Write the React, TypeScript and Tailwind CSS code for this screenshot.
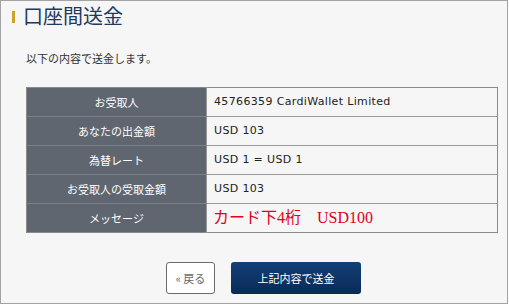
const rows: { label: string; value: string }[] = [
  { label: 'お受取人', value: '45766359 CardiWallet Limited' },
  { label: 'あなたの出金額', value: 'USD 103' },
  { label: '為替レート', value: 'USD 1 = USD 1' },
  { label: 'お受取人の受取金額', value: 'USD 103' },
];

const jp = "font-['Noto_Sans_CJK_JP',sans-serif]";

export default function App() {
  return (
    <div className="w-[509px] h-[306px] bg-white">
      <div className={`w-[508px] h-[304px] border border-[#a3a3a3] bg-[#f6f6f6] ${jp}`}>
        {/* 見出し */}
        <div className="flex items-center h-[29px] pl-[11px]">
          <span className="w-[3px] h-[12px] bg-[#c9a227] mt-[2px]" />
          <h1 className="ml-[8px] text-[20px] leading-none text-[#1f3a5f]">口座間送金</h1>
        </div>

        <p className="mt-[20px] ml-[25px] text-[11px] leading-[16px] text-[#333]">以下の内容で送金します。</p>

        {/* 確認テーブル */}
        <table className="mt-[21px] ml-[25px] w-[472px] border-collapse border border-[#8a8a8a]">
          <tbody>
            {rows.map((row) => (
              <tr key={row.label} className="h-[29px]">
                <th className="w-[180px] bg-[#5f6670] border-b border-[#77808a] text-[11px] font-normal text-white text-center">
                  {row.label}
                </th>
                <td className="pl-[7px] border-b border-l border-[#9a9a9a] text-[11px] tracking-[0.35px] text-[#222] font-['DejaVu_Sans',sans-serif]">
                  {row.value}
                </td>
              </tr>
            ))}
            <tr className="h-[29px]">
              <th className="w-[180px] bg-[#5f6670] text-[11px] font-normal text-white text-center">メッセージ</th>
              <td className="pl-[6px] border-l border-[#9a9a9a] text-[16px] leading-none text-[#e0001a] font-['Liberation_Serif','Noto_Sans_CJK_JP',serif]">
                カード下4桁　USD100
              </td>
            </tr>
          </tbody>
        </table>

        {/* ボタン */}
        <div className="flex justify-center gap-[16px] mt-[29px] pl-[19px]">
          <button className="w-[49px] h-[32px] bg-white border border-[#6b6b6b] rounded-[3px] text-[11px] text-[#666]">
            « 戻る
          </button>
          <button className="w-[130px] h-[32px] bg-gradient-to-b from-[#123f78] to-[#0a2a57] rounded-[3px] text-[11px] text-white">
            上記内容で送金
          </button>
        </div>
      </div>
    </div>
  );
}
